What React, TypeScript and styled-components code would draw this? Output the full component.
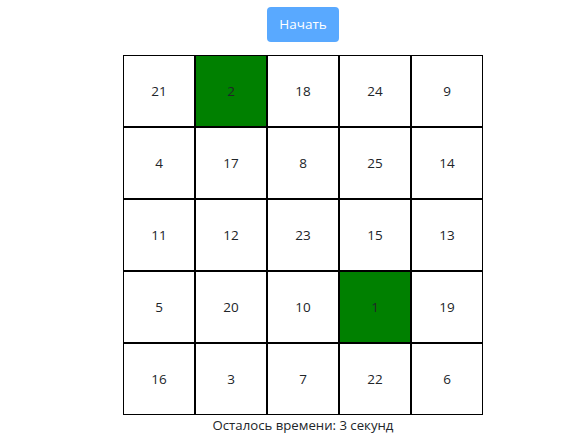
import React from 'react';
import styled, { createGlobalStyle } from 'styled-components';

const cells = [21, 2, 18, 24, 9, 4, 17, 8, 25, 14, 11, 12, 23, 15, 13, 5, 20, 10, 1, 19, 16, 3, 7, 22, 6];
const found = [1, 2];

const GlobalStyle = createGlobalStyle`
  body {
    margin: 0;
    background: #fff;
    font-family: "Open Sans", "Noto Sans", sans-serif;
    color: #212529;
  }
`;

const Page = styled.div`
  display: flex;
  flex-direction: column;
  align-items: center;
  padding: 7px 0 0 20px;
`;

const StartButton = styled.button`
  font-family: inherit;
  font-size: 13.5px;
  line-height: 21px;
  padding: 6px 11px;
  border: 1px solid transparent;
  border-radius: 4px;
  color: #fff;
  background: #59a9ff;
  margin-bottom: 13px;
`;

const Board = styled.div`
  display: grid;
  grid-template-columns: repeat(5, 72px);
  grid-auto-rows: 72px;
`;

const Cell = styled.div<{ $hit: boolean }>`
  box-sizing: border-box;
  border: 1px solid #000;
  display: flex;
  align-items: center;
  justify-content: center;
  font-size: 13.5px;
  background: ${({ $hit }) => ($hit ? '#008000' : '#fff')};
`;

const Timer = styled.div`
  font-size: 13.2px;
  line-height: 19px;
  margin-top: 1px;
`;

export default function App() {
  return (
    <Page>
      <GlobalStyle />
      <StartButton disabled>Начать</StartButton>
      <Board>
        {cells.map((n) => (
          <Cell key={n} $hit={found.includes(n)}>
            {n}
          </Cell>
        ))}
      </Board>
      <Timer>Осталось времени: 3 секунд</Timer>
    </Page>
  );
}
